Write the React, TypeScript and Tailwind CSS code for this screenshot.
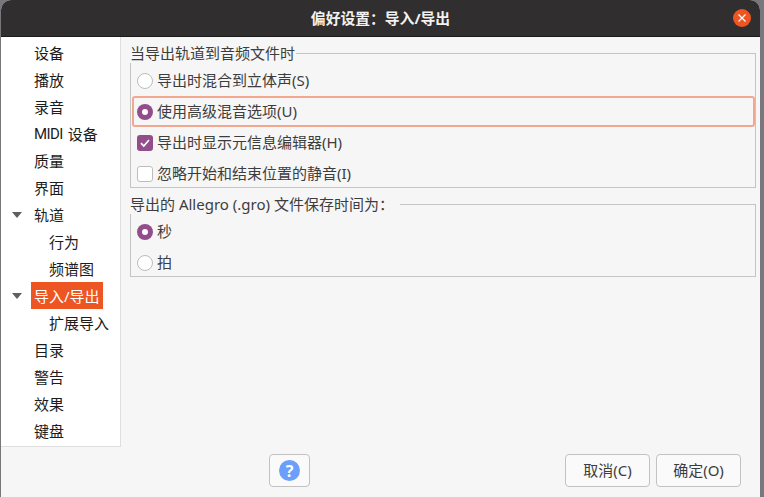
const font = { fontFamily: '"Noto Sans", "Noto Sans CJK SC", sans-serif' };

function Radio({ checked }: { checked?: boolean }) {
  return checked ? (
    <span className="w-4 h-4 rounded-full bg-[#924d8b] flex items-center justify-center shrink-0">
      <span className="w-[6px] h-[6px] rounded-full bg-white" />
    </span>
  ) : (
    <span className="w-4 h-4 rounded-full border border-[#bdbdbd] bg-white shrink-0" />
  );
}

function Check({ checked }: { checked?: boolean }) {
  return checked ? (
    <span className="w-4 h-4 rounded-[3px] bg-[#924d8b] flex items-center justify-center shrink-0">
      <svg width="12" height="12" viewBox="0 0 12 12" fill="none">
        <path d="M2 6.2 L4.8 9 L10 3" stroke="white" strokeWidth="1.7" />
      </svg>
    </span>
  ) : (
    <span className="w-4 h-4 rounded-[3px] border border-[#bdbdbd] bg-white shrink-0" />
  );
}

function OptRow({ icon, label, focus }: { icon: React.ReactNode; label: string; focus?: boolean }) {
  return (
    <div className="h-[31px] flex items-center">
      <div
        className={
          "flex-1 h-[31px] flex items-center gap-[4px] rounded-[3px] " +
          (focus ? "border-2 border-[#f4a78f] pl-[3px]" : "pl-[5px]")
        }
      >
        {icon}
        <span className="text-[15px] text-[#3d3d3d] leading-none">{label}</span>
      </div>
    </div>
  );
}

function Arrow() {
  return (
    <svg width="10" height="6" viewBox="0 0 10 6" className="ml-[11px]">
      <path d="M0 0 H10 L5 6 Z" fill="#5f5f5f" />
    </svg>
  );
}

function TreeRow({ label, depth, arrow, active, children }: { label?: string; depth?: number; arrow?: boolean; active?: boolean; children?: React.ReactNode }) {
  return (
    <div className="h-[27px] flex items-center">
      <div className="w-[30px] shrink-0">{arrow && <Arrow />}</div>
      <div
        className={
          "h-[27px] flex items-center pl-[3px] pt-[2px] text-[15px] whitespace-nowrap " +
          (depth ? "ml-[15px] " : "") +
          (active ? "bg-[#ed5523] text-white w-[72px]" : "text-[#1c1c1c]")
        }
      >
        {label}
        {children}
      </div>
    </div>
  );
}

function Btn({ children, w }: { children: React.ReactNode; w: string }) {
  return (
    <button className={"h-[33px] rounded-[4px] border border-[#c2c2c2] bg-[#fafafa] text-[15px] text-[#3d3d3d] flex items-center justify-center " + w}>
      {children}
    </button>
  );
}

export default function App() {
  return (
    <div style={font} className="w-[764px] h-[497px] bg-[#77777c] pl-[1px] pr-[4px] overflow-hidden">
      <div className="w-[759px] h-[497px] bg-[#f6f6f6] rounded-t-[10px] overflow-hidden flex flex-col">
        <div className="h-[37px] bg-[#302e2e] border-b border-[#1c1b1b] flex items-center justify-center relative shrink-0">
          <span className="text-[14.8px] font-bold text-[#f2f2f2]">偏好设置：导入/导出</span>
          <span className="absolute right-[9px] top-[9px] w-[18px] h-[18px] rounded-full bg-[#ed5523] flex items-center justify-center">
            <svg width="10" height="10" viewBox="0 0 10 10">
              <path d="M1.5 1.5 L8.5 8.5 M8.5 1.5 L1.5 8.5" stroke="white" strokeWidth="1.2" />
            </svg>
          </span>
        </div>
        <div className="h-[410px] flex shrink-0">
          <div className="w-[120px] bg-white border-r border-b border-[#dedede] pt-[2px] shrink-0">
            <TreeRow label="设备" />
            <TreeRow label="播放" />
            <TreeRow label="录音" />
            <TreeRow>
              <span className="font-['Roboto'] tracking-[-0.6px] mr-[5px]">MIDI</span>设备
            </TreeRow>
            <TreeRow label="质量" />
            <TreeRow label="界面" />
            <TreeRow label="轨道" arrow />
            <TreeRow label="行为" depth={1} />
            <TreeRow label="频谱图" depth={1} />
            <TreeRow label="导入/导出" arrow active />
            <TreeRow label="扩展导入" depth={1} />
            <TreeRow label="目录" />
            <TreeRow label="警告" />
            <TreeRow label="效果" />
            <TreeRow label="键盘" />
          </div>
          <div className="flex-1 pl-[9px] pr-[4px] pt-[6px]">
            <fieldset className="border border-[#c4c4c4] h-[145px] pl-[1px]">
              <legend className="text-[15px] text-[#3d3d3d] leading-[20px] h-[20px] -ml-[2px] pr-[1px]">当导出轨道到音频文件时</legend>
              <div className="mt-[2px]">
                <OptRow icon={<Radio />} label="导出时混合到立体声(S)" />
                <OptRow icon={<Radio checked />} label="使用高级混音选项(U)" focus />
                <OptRow icon={<Check checked />} label="导出时显示元信息编辑器(H)" />
                <OptRow icon={<Check />} label="忽略开始和结束位置的静音(I)" />
              </div>
            </fieldset>
            <fieldset className="border border-[#c4c4c4] h-[83px] mt-[6px] pl-[1px]">
              <legend className="text-[15px] text-[#3d3d3d] leading-[20px] h-[20px] -ml-[2px] pr-[6px]">导出的 Allegro (.gro) 文件保存时间为：</legend>
              <div className="mt-[2px]">
                <OptRow icon={<Radio checked />} label="秒" />
                <OptRow icon={<Radio />} label="拍" />
              </div>
            </fieldset>
          </div>
        </div>
        <div className="flex items-start pt-[7px] pl-[268px] pr-[19px]">
          <Btn w="w-[41px]">
            <span className="w-[21px] h-[21px] rounded-full bg-[#6a9ffb] text-white font-bold text-[16px] flex items-center justify-center leading-none">?</span>
          </Btn>
          <div className="ml-auto flex gap-[6px]">
            <Btn w="w-[85px]">取消(C)</Btn>
            <Btn w="w-[85px]">确定(O)</Btn>
          </div>
        </div>
      </div>
    </div>
  );
}
